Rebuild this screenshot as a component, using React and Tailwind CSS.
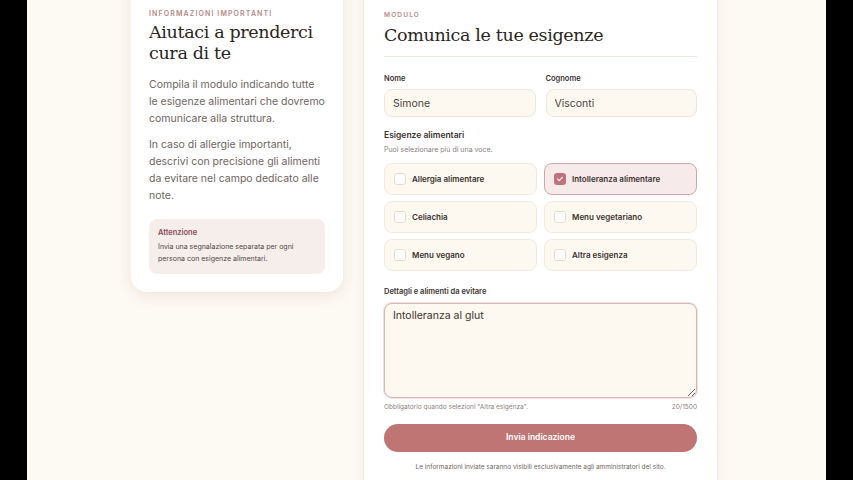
import React, { useState } from "react";

const sans = { fontFamily: "Inter, 'Noto Sans', sans-serif" };
const serif = { fontFamily: "'DejaVu Serif', serif" };

const options = [
  "Allergia alimentare",
  "Intolleranza alimentare",
  "Celiachia",
  "Menu vegetariano",
  "Menu vegano",
  "Altra esigenza",
];

const Check = ({ checked }) => (
  <span
    className={
      checked
        ? "flex h-3 w-3 shrink-0 items-center justify-center rounded-[3px] bg-[#c0737a]"
        : "h-3 w-3 shrink-0 rounded-[3px] border border-[#e6dbd0] bg-white"
    }
  >
    {checked && (
      <svg viewBox="0 0 12 12" className="h-2 w-2">
        <path d="M2.5 6.2l2.3 2.2 4.7-4.8" fill="none" stroke="#fff" strokeWidth="1.6" strokeLinecap="round" strokeLinejoin="round" />
      </svg>
    )}
  </span>
);

export default function App() {
  const [selected, setSelected] = useState(["Intolleranza alimentare"]);
  const [notes, setNotes] = useState("Intolleranza al glut");

  const toggle = (o) =>
    setSelected((s) => (s.includes(o) ? s.filter((x) => x !== o) : [...s, o]));

  return (
    <div className="flex h-[480px] overflow-hidden bg-black text-[10px] leading-[1.3]" style={sans}>
      <div className="mx-[27px] flex-1 overflow-hidden bg-[#fdf9f3]">
        <div className="-mt-6 flex justify-center gap-5 pr-[4px]">
          {/* Left info card */}
          <aside className="h-fit w-[212px] rounded-2xl bg-white px-[18px] pb-[18px] pt-[33px] shadow-[0_4px_14px_rgba(120,90,60,0.12)]">
            <p className="text-[7px] leading-[9px] font-semibold uppercase tracking-[0.16em] text-[#b48a88]">
              Informazioni importanti
            </p>
            <h1
              className="mt-[4px] text-[17.5px] leading-[21px] tracking-[-0.02em] text-[#2b2522]"
              style={serif}
            >
              Aiutaci a prenderci cura di te
            </h1>
            <p className="mt-[12px] text-[10.5px] leading-[17px] text-[#6e6560]">
              Compila il modulo indicando tutte le esigenze alimentari che dovremo comunicare alla struttura.
            </p>
            <p className="mt-[9px] text-[10.5px] leading-[17px] text-[#6e6560]">
              In caso di allergie importanti, descrivi con precisione gli alimenti da evitare nel campo dedicato alle note.
            </p>
            <div className="mt-[15px] rounded-lg bg-[#f6eeeb] px-[9px] pb-[9px] pt-[9px]">
              <p className="text-[7.5px] leading-[10px] font-semibold text-[#8a4a55]">Attenzione</p>
              <p className="mt-[3px] text-[7px] leading-[12px] text-[#4e4643]">
                Invia una segnalazione separata per ogni persona con esigenze alimentari.
              </p>
            </div>
          </aside>

          {/* Right form card */}
          <main className="w-[355px] rounded-2xl border border-[#f1e9e0] bg-white px-5 pt-[34px] pb-6 shadow-[0_4px_14px_rgba(120,90,60,0.06)]">
            <p className="text-[6.5px] leading-[8px] font-semibold uppercase tracking-[0.18em] text-[#b48a88]">Modulo</p>
            <h2
              className="mt-[5px] text-[17.5px] leading-[22px] tracking-[-0.02em] text-[#2b2522]"
              style={serif}
            >
              Comunica le tue esigenze
            </h2>
            <div className="mt-[10px] h-px bg-[#efe7df]" />

            <div className="mt-[17px] grid grid-cols-2 gap-[10px]">
              <label className="block">
                <span className="block text-[7.5px] leading-[10px] font-semibold text-[#3a322e]">Nome</span>
                <input
                  defaultValue="Simone"
                  className="mt-[5px] block h-[28px] w-full rounded-lg border border-[#f0e6da] bg-[#fdf8f0] px-[8px] text-[10.5px] text-[#4a423e] outline-none"
                />
              </label>
              <label className="block">
                <span className="block text-[7.5px] leading-[10px] font-semibold text-[#3a322e]">Cognome</span>
                <input
                  defaultValue="Visconti"
                  className="mt-[5px] block h-[28px] w-full rounded-lg border border-[#f0e6da] bg-[#fdf8f0] px-[8px] text-[10.5px] text-[#4a423e] outline-none"
                />
              </label>
            </div>

            <p className="mt-[13px] text-[8.5px] leading-[11px] font-semibold text-[#3a322e]">Esigenze alimentari</p>
            <p className="mt-[4px] text-[7px] leading-[9px] text-[#8a817b]">Puoi selezionare più di una voce.</p>

            <div className="mt-[9px] grid grid-cols-2 gap-x-[7px] gap-y-[6px]">
              {options.map((o) => {
                const on = selected.includes(o);
                return (
                  <button
                    key={o}
                    type="button"
                    onClick={() => toggle(o)}
                    className={
                      on
                        ? "flex h-[32px] items-center gap-[6px] rounded-lg border border-[#cfa7ab] bg-[#f7eaea] px-[9px] text-left"
                        : "flex h-[32px] items-center gap-[6px] rounded-lg border border-[#f2e9df] bg-[#fdf8f0] px-[9px] text-left"
                    }
                  >
                    <Check checked={on} />
                    <span className="text-[8px] leading-[10px] font-semibold text-[#3a322e]">{o}</span>
                  </button>
                );
              })}
            </div>

            <p className="mt-[16px] text-[7.5px] leading-[10px] font-semibold text-[#3a322e]">Dettagli e alimenti da evitare</p>
            <textarea
              value={notes}
              onChange={(e) => setNotes(e.target.value)}
              className="mt-[6px] block h-[95px] w-full resize-y rounded-lg border border-[#d8b7b6] bg-[#fdf8f0] px-[8px] py-[5px] text-[10.5px] leading-[14px] text-[#3a322e] shadow-[0_0_0_1px_#f1e1df] outline-none"
            />
            <div className="mt-[5px] flex justify-between text-[6.5px] leading-[8px] text-[#8a817b]">
              <span>Obbligatorio quando selezioni "Altra esigenza".</span>
              <span>{notes.length}/1500</span>
            </div>

            <button
              type="button"
              className="mt-[13px] h-[28px] w-full rounded-full bg-[#c07575] text-[8.5px] font-semibold text-white"
            >
              Invia indicazione
            </button>
            <p className="mt-[11px] text-center text-[6.5px] leading-[8px] text-[#6e6560]">
              Le informazioni inviate saranno visibili esclusivamente agli amministratori del sito.
            </p>
          </main>
        </div>
      </div>
    </div>
  );
}
